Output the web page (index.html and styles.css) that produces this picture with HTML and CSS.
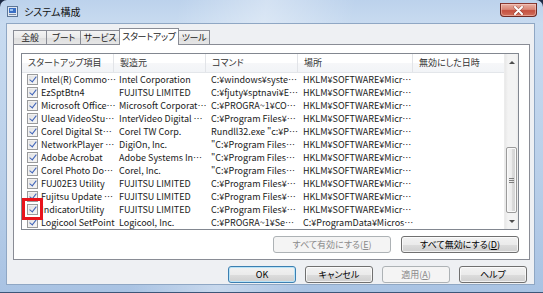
FILE: index.html
```html
<!DOCTYPE html>
<html lang="ja">
<head>
<meta charset="utf-8">
<title>システム構成</title>
<link rel="stylesheet" href="styles.css">
</head>
<body>
<div class="window">
  <div class="titlebar">
    <svg class="app-icon" width="11" height="11" viewBox="0 0 11 11">
      <rect x="0.5" y="0.5" width="10" height="10" fill="#dfe7f1" stroke="#5d7696"/>
      <rect x="2" y="2" width="7" height="5" fill="#3a6fc4"/>
      <rect x="3" y="3" width="3" height="2" fill="#9cc3f0"/>
      <rect x="2" y="8" width="7" height="1" fill="#7d8da3"/>
    </svg>
    <span class="title">システム構成</span>
    <div class="close">
      <svg width="11" height="9" viewBox="0 0 11 9">
        <path d="M2 1 L9 8 M9 1 L2 8" stroke="#4a1410" stroke-width="3" stroke-linecap="round" opacity="0.45"/>
        <path d="M2 1 L9 8 M9 1 L2 8" stroke="#ffffff" stroke-width="2" stroke-linecap="round"/>
      </svg>
    </div>
  </div>
  <div class="client">
    <div class="tabs">
      <div class="tab tab-general">全般</div>
      <div class="tab tab-boot">ブート</div>
      <div class="tab tab-services">サービス</div>
      <div class="tab tab-startup active">スタートアップ</div>
      <div class="tab tab-tools">ツール</div>
    </div>
    <div class="panel">
      <div class="list">
        <div class="list-main">
          <div class="lv-row lv-header">
            <div class="cell c1">スタートアップ項目</div>
            <div class="cell c2">製造元</div>
            <div class="cell c3">コマンド</div>
            <div class="cell c4">場所</div>
            <div class="cell c5">無効にした日時</div>
          </div>
          <div class="lv-row"><div class="cell c1"><span class="check"></span>Intel(R) Commo…</div><div class="cell c2">Intel Corporation</div><div class="cell c3">C:¥windows¥syste…</div><div class="cell c4">HKLM¥SOFTWARE¥Micr…</div><div class="cell c5"></div></div>
          <div class="lv-row"><div class="cell c1"><span class="check"></span>EzSptBtn4</div><div class="cell c2">FUJITSU LIMITED</div><div class="cell c3">C:¥fjuty¥sptnavi¥E…</div><div class="cell c4">HKLM¥SOFTWARE¥Micr…</div><div class="cell c5"></div></div>
          <div class="lv-row"><div class="cell c1"><span class="check"></span>Microsoft Office…</div><div class="cell c2">Microsoft Corporat…</div><div class="cell c3">C:¥PROGRA~1¥CO…</div><div class="cell c4">HKLM¥SOFTWARE¥Micr…</div><div class="cell c5"></div></div>
          <div class="lv-row"><div class="cell c1"><span class="check"></span>Ulead VideoStu…</div><div class="cell c2">InterVideo Digital …</div><div class="cell c3">C:¥Program Files¥…</div><div class="cell c4">HKLM¥SOFTWARE¥Micr…</div><div class="cell c5"></div></div>
          <div class="lv-row"><div class="cell c1"><span class="check"></span>Corel Digital St…</div><div class="cell c2">Corel TW Corp.</div><div class="cell c3">Rundll32.exe "c:¥P…</div><div class="cell c4">HKLM¥SOFTWARE¥Micr…</div><div class="cell c5"></div></div>
          <div class="lv-row"><div class="cell c1"><span class="check"></span>NetworkPlayer …</div><div class="cell c2">DigiOn, Inc.</div><div class="cell c3">"C:¥Program Files…</div><div class="cell c4">HKLM¥SOFTWARE¥Micr…</div><div class="cell c5"></div></div>
          <div class="lv-row"><div class="cell c1"><span class="check"></span>Adobe Acrobat</div><div class="cell c2">Adobe Systems In…</div><div class="cell c3">"C:¥Program Files…</div><div class="cell c4">HKLM¥SOFTWARE¥Micr…</div><div class="cell c5"></div></div>
          <div class="lv-row"><div class="cell c1"><span class="check"></span>Corel Photo Do…</div><div class="cell c2">Corel, Inc.</div><div class="cell c3">"C:¥Program Files…</div><div class="cell c4">HKLM¥SOFTWARE¥Micr…</div><div class="cell c5"></div></div>
          <div class="lv-row"><div class="cell c1"><span class="check"></span>FUJ02E3 Utility</div><div class="cell c2">FUJITSU LIMITED</div><div class="cell c3">C:¥Program Files¥…</div><div class="cell c4">HKLM¥SOFTWARE¥Micr…</div><div class="cell c5"></div></div>
          <div class="lv-row"><div class="cell c1"><span class="check"></span>Fujitsu Update …</div><div class="cell c2">FUJITSU LIMITED</div><div class="cell c3">C:¥Program Files¥…</div><div class="cell c4">HKLM¥SOFTWARE¥Micr…</div><div class="cell c5"></div></div>
          <div class="lv-row"><div class="cell c1"><span class="check marked"><span class="mark"></span></span>IndicatorUtility</div><div class="cell c2">FUJITSU LIMITED</div><div class="cell c3">C:¥Program Files¥…</div><div class="cell c4">HKLM¥SOFTWARE¥Micr…</div><div class="cell c5"></div></div>
          <div class="lv-row"><div class="cell c1"><span class="check"></span>Logicool SetPoint</div><div class="cell c2">Logicool, Inc.</div><div class="cell c3">C:¥PROGRA~1¥Se…</div><div class="cell c4">C:¥ProgramData¥Micros…</div><div class="cell c5"></div></div>
        </div>
        <div class="scrollbar">
          <div class="sb-arrow"><span class="tri-up"></span></div>
          <div class="sb-space"></div>
          <div class="sb-thumb"><span class="grip"></span></div>
          <div class="sb-arrow down"><span class="tri-down"></span></div>
        </div>
      </div>
      <div class="panel-buttons">
        <button class="btn wide disabled">すべて有効にする(<u>E</u>)</button>
        <button class="btn wide">すべて無効にする(<u>D</u>)</button>
      </div>
    </div>
    <div class="dialog-buttons">
      <button class="btn default">OK</button>
      <button class="btn">キャンセル</button>
      <button class="btn disabled">適用(<u>A</u>)</button>
      <button class="btn">ヘルプ</button>
    </div>
  </div>
</div>
</body>
</html>
```

FILE: styles.css
```css
* { box-sizing: border-box; }
html, body { margin: 0; padding: 0; }
body {
  width: 543px;
  height: 293px;
  overflow: hidden;
  background: #1d2a44;
  font-family: "Noto Sans CJK JP", "Noto Sans", sans-serif;
  font-size: 9px;
  font-feature-settings: "palt";
  color: #000;
}

.window {
  width: 543px;
  height: 293px;
  border-radius: 7px 7px 0 0;
  background:
    linear-gradient(100deg, rgba(255,255,255,0) 30%, rgba(255,255,255,0.35) 45%, rgba(255,255,255,0) 60%),
    linear-gradient(to bottom, #bcd2ec 0, #c8dbf0 24px, #b9cfe9 60%, #a9c3e3 100%);
  display: flex;
  flex-direction: column;
  padding: 0 8px 7px 6px;
  border-bottom: 1px solid #3d5678;
}

/* title bar */
.titlebar {
  height: 23px;
  display: flex;
  align-items: center;
}
.app-icon { margin-left: 1px; flex: none; }
.title {
  margin-left: 6px;
  font-size: 10px;
  color: #111;
}
.close {
  margin-left: auto;
  margin-right: -2px;
  align-self: flex-start;
  margin-top: 3px;
  width: 37px;
  height: 14px;
  border: 1px solid #6e2a24;
  border-top-color: #8a3a33;
  border-radius: 0 0 4px 4px;
  background: linear-gradient(to bottom, #e8b0a4 0%, #d98676 45%, #c5503f 55%, #d0705c 100%);
  display: flex;
  align-items: center;
  justify-content: center;
  box-shadow: inset 0 0 0 1px rgba(255,220,210,0.45);
}

/* client area */
.client {
  flex: 1;
  background: #eef0f3;
  border: 1px solid #8fa7c4;
  padding: 4px 4px 0 6px;
  display: flex;
  flex-direction: column;
}

.tabs {
  display: flex;
  align-items: flex-end;
  height: 17px;
  margin-bottom: -1px;
  position: relative;
  z-index: 1;
}
.tab {
  height: 14px;
  margin-bottom: 1px;
  padding: 0;
  text-align: center;
  line-height: 13px;
  letter-spacing: -0.3px;
  border: 1px solid #898c95;
  border-bottom: none;
  margin-right: -1px;
  background: linear-gradient(to bottom, #f4f4f4 0%, #eaeaea 50%, #dedede 51%, #e6e6e6 100%);
  white-space: nowrap;
  color: #222;
  flex: none;
}
.tab-general { width: 34px; }
.tab-boot { width: 35px; }
.tab-services { width: 40px; }
.tab-startup { width: 60px; }
.tab-tools { width: 32px; }
.tab.active {
  height: 17px;
  margin-bottom: 0;
  background: #fff;
  line-height: 15px;
  position: relative;
  z-index: 2;
}

.panel {
  height: 216px;
  border: 1px solid #898c95;
  background: #fff;
  padding: 8px 10px 0 7px;
  display: flex;
  flex-direction: column;
}

/* list view */
.list {
  height: 177px;
  border: 1px solid #828790;
  display: flex;
  background: #fff;
}
.list-main {
  flex: 1;
  display: flex;
  flex-direction: column;
  min-width: 0;
}
.lv-row {
  display: flex;
  height: 13px;
  line-height: 13px;
  flex: none;
  color: #1a1a1a;
}
.lv-header {
  height: 19px;
  line-height: 18px;
  border-bottom: 1px solid #e3e6ea;
  background: linear-gradient(to bottom, #ffffff 0%, #ffffff 50%, #f6f7f9 51%, #f2f4f7 100%);
  color: #333;
}
.cell {
  padding-left: 5px;
  white-space: nowrap;
  overflow: hidden;
  display: flex;
  align-items: center;
  flex: none;
}
.lv-header .cell {
  padding-left: 6px;
  border-right: 1px solid #e2e4e8;
}
.lv-header .c5 { border-right: none; }
.c1 { width: 92px; }
.c2 { width: 92px; }
.c3 { width: 92px; }
.c4 { width: 115px; }
.c5 { flex: 1; }

.check {
  width: 11px;
  height: 11px;
  border: 1px solid #9a9b9c;
  background: linear-gradient(135deg, #dedede, #f8f8f8);
  margin-right: 3px;
  flex: none;
  position: relative;
  box-shadow: inset 0 0 0 1px #f2f2f2;
}
.check::after {
  content: "";
  position: absolute;
  left: 3px;
  top: 0px;
  width: 3px;
  height: 6px;
  border-right: 1.5px solid #3f63b8;
  border-bottom: 1.5px solid #3f63b8;
  transform: rotate(38deg);
}
.mark {
  position: absolute;
  left: -6px;
  top: -7px;
  width: 21px;
  height: 22px;
  border: 3px solid #e8141c;
  z-index: 3;
}
.marked { overflow: visible; }
.lv-row .c1 { overflow: visible; }

/* scrollbar */
.scrollbar {
  width: 14px;
  flex: none;
  display: flex;
  flex-direction: column;
  background: linear-gradient(to right, #e8e8e8 0, #f3f3f3 3px, #f3f3f3 11px, #eaeaea 100%);
  border-left: 1px solid #ececec;
}
.sb-arrow {
  height: 17px;
  display: flex;
  align-items: center;
  justify-content: center;
  flex: none;
}
.sb-arrow.down { height: 16px; }
.tri-up {
  width: 0; height: 0;
  border-left: 3px solid transparent;
  border-right: 3px solid transparent;
  border-bottom: 3px solid #4d4d4d;
}
.tri-down {
  width: 0; height: 0;
  border-left: 3px solid transparent;
  border-right: 3px solid transparent;
  border-top: 3px solid #4d4d4d;
}
.sb-space { flex: 1; }
.sb-thumb {
  height: 66px;
  margin: 0 1px;
  border: 1px solid #9b9b9b;
  border-radius: 2px;
  background: linear-gradient(to right, #f5f5f5 0%, #ececec 50%, #dcdcdc 51%, #d4d4d4 100%);
  box-shadow: inset 0 0 0 1px #fafafa;
  display: flex;
  align-items: center;
  justify-content: center;
  flex: none;
}
.grip {
  width: 5px;
  height: 5px;
  background: repeating-linear-gradient(to bottom, #7e7e7e 0, #7e7e7e 1px, transparent 1px, transparent 2px);
}

/* buttons */
.panel-buttons {
  display: flex;
  justify-content: flex-end;
  gap: 10px;
  margin-top: 6px;
}
.dialog-buttons {
  display: flex;
  justify-content: flex-end;
  gap: 9px;
  margin-top: 6px;
  padding-right: 3px;
}
.btn {
  height: 17px;
  width: 68px;
  padding: 0;
  border: 1px solid #707070;
  border-radius: 3px;
  background: linear-gradient(to bottom, #f2f2f2 0%, #ebebeb 50%, #dddddd 51%, #cfcfcf 100%);
  box-shadow: inset 0 0 0 1px rgba(255,255,255,0.7);
  font-family: inherit;
  font-size: 9px;
  font-feature-settings: "palt";
  color: #000;
  line-height: 14px;
}
.btn.wide { width: 118px; }
.btn.default {
  border-color: #3c7fb1;
  box-shadow: inset 0 0 0 1px #b9e3f7;
}
.btn.disabled {
  border-color: #adb2b5;
  background: #f4f4f4;
  color: #8a8a8a;
  box-shadow: none;
}
u { text-decoration: underline; text-underline-offset: 1px; }
```
